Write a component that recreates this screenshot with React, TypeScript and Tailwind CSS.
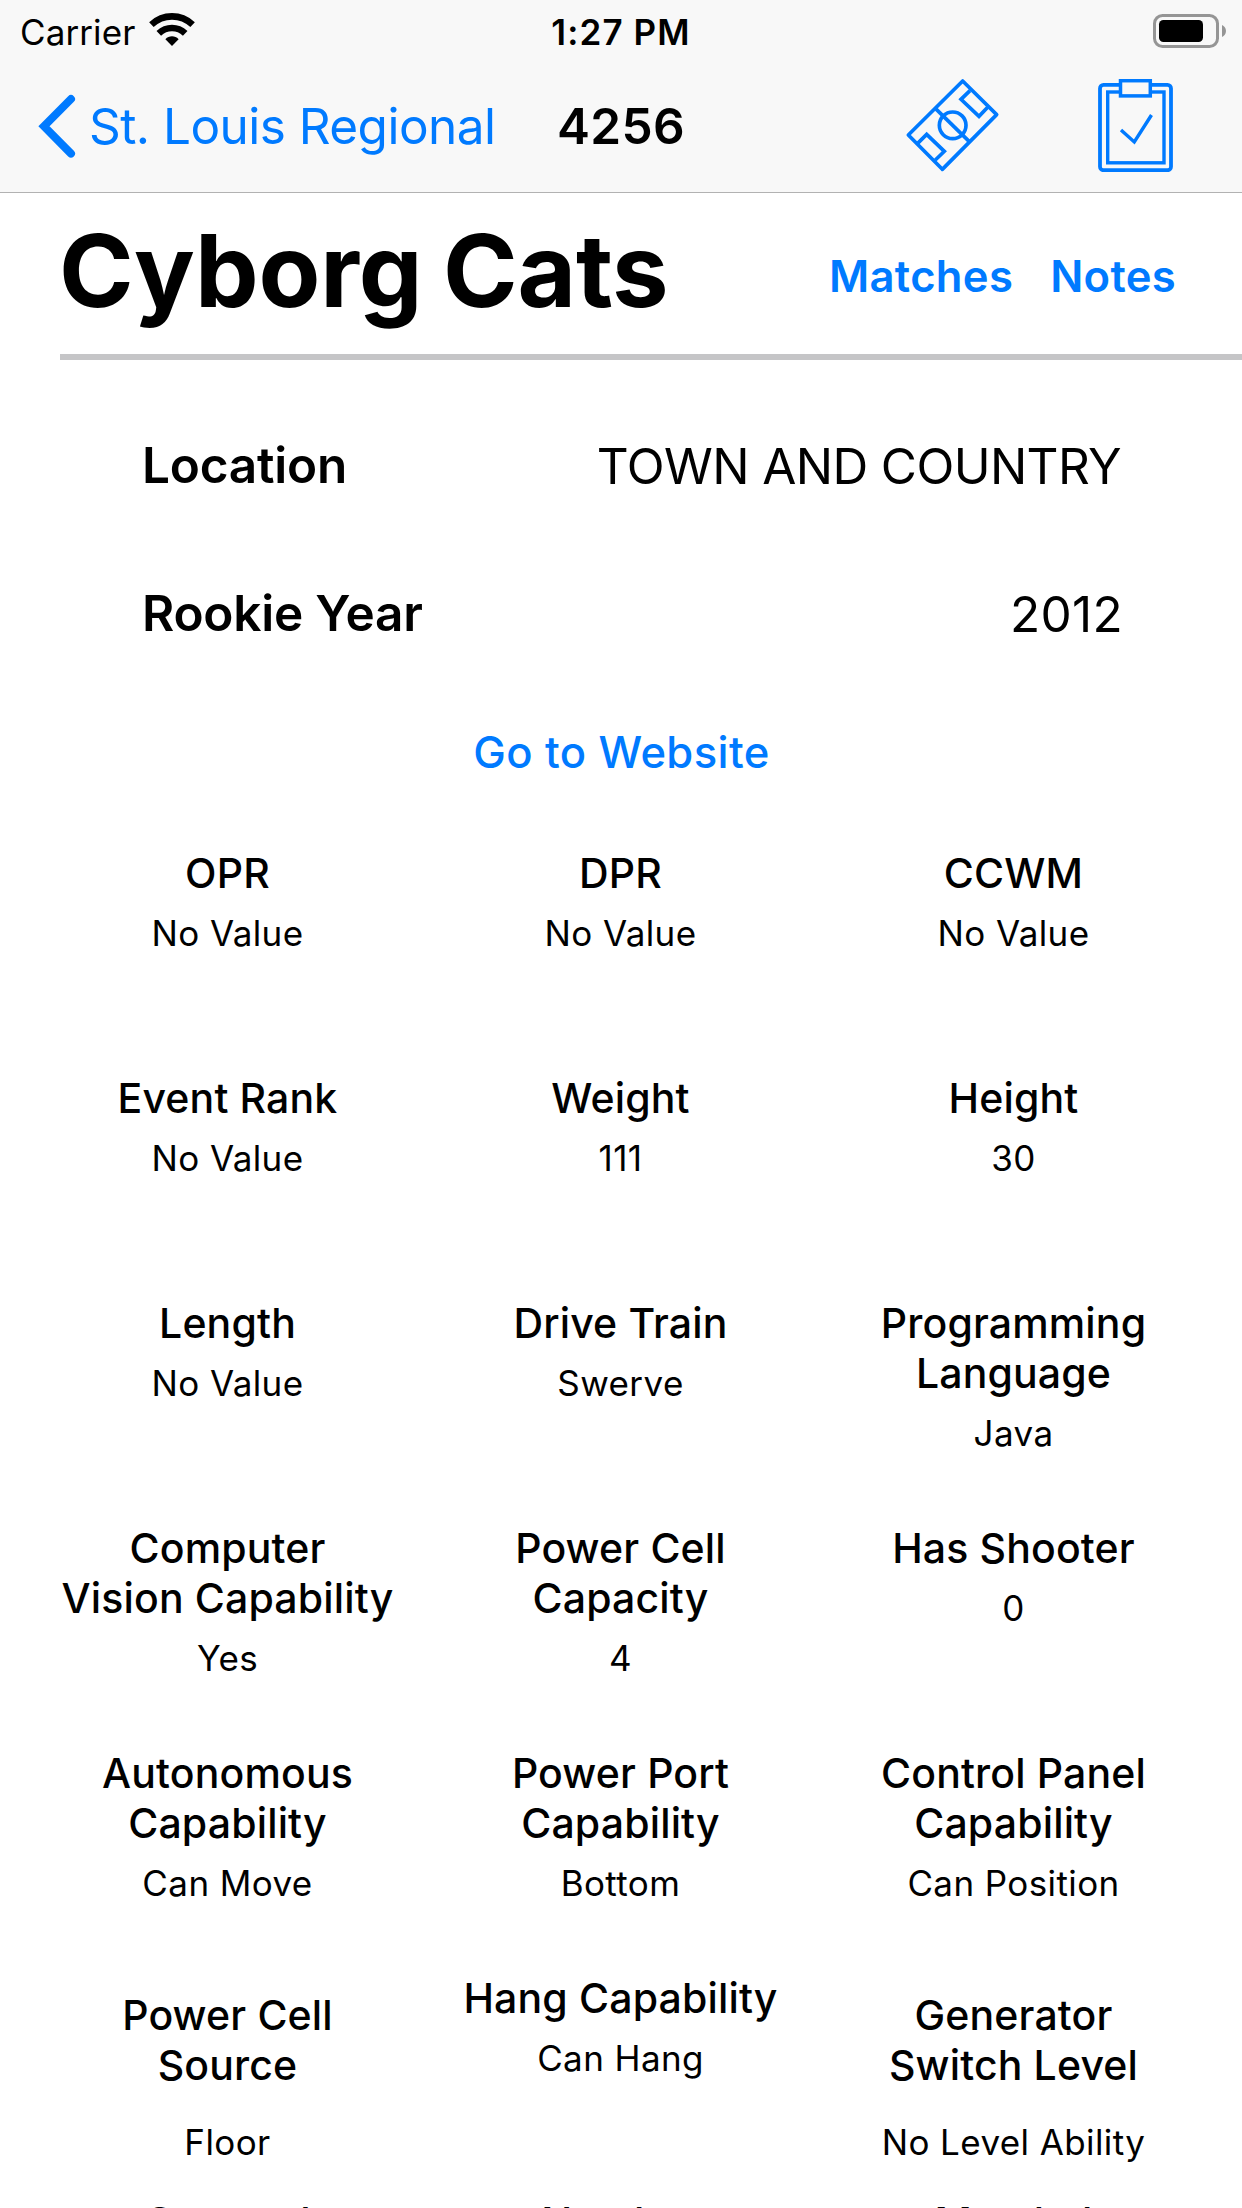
import React from "react";

type Stat = { title: string[]; value: string; layout?: "spread" | "raised" };

const stats: Stat[] = [
  { title: ["OPR"], value: "No Value" },
  { title: ["DPR"], value: "No Value" },
  { title: ["CCWM"], value: "No Value" },
  { title: ["Event Rank"], value: "No Value" },
  { title: ["Weight"], value: "111" },
  { title: ["Height"], value: "30" },
  { title: ["Length"], value: "No Value" },
  { title: ["Drive Train"], value: "Swerve" },
  { title: ["Programming", "Language"], value: "Java" },
  { title: ["Computer", "Vision Capability"], value: "Yes" },
  { title: ["Power Cell", "Capacity"], value: "4" },
  { title: ["Has Shooter"], value: "0" },
  { title: ["Autonomous", "Capability"], value: "Can Move" },
  { title: ["Power Port", "Capability"], value: "Bottom" },
  { title: ["Control Panel", "Capability"], value: "Can Position" },
  { title: ["Power Cell", "Source"], value: "Floor", layout: "spread" },
  { title: ["Hang Capability"], value: "Can Hang" },
  { title: ["Generator", "Switch Level"], value: "No Level Ability", layout: "spread" },
  { title: ["Covered"], value: "", layout: "raised" },
  { title: ["Number"], value: "", layout: "raised" },
  { title: ["Marshal"], value: "", layout: "raised" },
];

const cellClass = {
  normal: "flex flex-col gap-[14px]",
  spread: "flex flex-col gap-[31px] pt-[17px]",
  raised: "-mt-px flex flex-col gap-[14px]",
};

function WifiIcon() {
  return (
    <svg className="mb-[3px] ml-[14px] h-[33px] w-[46px]" viewBox="0 0 46 33" fill="none" stroke="#000">
      <path d="M2.4 11.6C14.2 0.6 31.8 0.6 43.6 11.6" strokeWidth="6.6" />
      <path d="M9.8 20.4C17.4 13.2 28.6 13.2 36.2 20.4" strokeWidth="6.6" />
      <path d="M23 33L16.4 26.2C20 22.4 26 22.4 29.6 26.2Z" fill="#000" stroke="none" />
    </svg>
  );
}

function BatteryIcon() {
  return (
    <svg className="h-[34px] w-[74px]" viewBox="0 0 74 34" fill="none">
      <rect x="1.5" y="1.5" width="63" height="31" rx="8" stroke="#959595" strokeWidth="3" />
      <rect x="6" y="6" width="44" height="22" rx="4.5" fill="#000" />
      <path d="M69 11C71.2 12 73 14.2 73 17S71.2 22 69 23Z" fill="#959595" />
    </svg>
  );
}

function FieldIcon() {
  return (
    <svg className="h-[110px] w-[130px]" viewBox="0 0 390 330" fill="none" stroke="#007aff" strokeWidth="11">
      <path d="M218 33L320 134L157 298L55 195Z" strokeLinejoin="round" />
      <path d="M136 115L238 215" />
      <circle cx="188" cy="166" r="40" />
      <path d="M240 62L213 88L267 139L293 112M83 220L110 193L163 244L136 270" />
    </svg>
  );
}

function ClipboardIcon() {
  return (
    <svg className="h-[93px] w-[75px]" viewBox="0 0 75 93" fill="none" stroke="#007aff">
      <rect x="2" y="5.9" width="71" height="85.3" rx="3.5" strokeWidth="3.8" />
      <rect x="9.7" y="13" width="56.3" height="70.8" strokeWidth="3.4" />
      <rect x="22.5" y="1.7" width="29.8" height="15.2" strokeWidth="3.5" fill="#f8f8f8" />
      <path d="M23 51L36.3 63L53.5 36" strokeWidth="3.4" />
    </svg>
  );
}

export default function App() {
  return (
    <div className="flex h-[2208px] w-[1242px] flex-col overflow-hidden bg-white font-[Inter,sans-serif] text-black">
      <header className="h-[193px] shrink-0 border-b border-[#b2b2b2] bg-[#f8f8f8]">
        <div className="grid h-[60px] grid-cols-[1fr_auto_1fr] items-center text-[35px] leading-[60px]">
          <div className="flex items-center pl-5">
            <span className="pt-[2px] tracking-[0.1px]">Carrier</span>
            <WifiIcon />
          </div>
          <span className="pt-[2px] font-semibold tracking-[1.1px]">1:27 PM</span>
          <div className="flex justify-end pr-[15px]">
            <BatteryIcon />
          </div>
        </div>
        <nav className="grid h-[132px] grid-cols-[1fr_auto_1fr] items-center text-[49.5px] leading-[60px]">
          <button className="flex items-center pl-[38px] text-[#007aff]">
            <svg className="h-[64px] w-[38px]" viewBox="0 0 38 64" fill="none" stroke="#007aff" strokeWidth="8" strokeLinecap="round">
              <path d="M33 5L6 32.3L33 59.6" />
            </svg>
            <span className="ml-[13px] whitespace-nowrap tracking-[-0.54px]">St. Louis Regional</span>
          </button>
          <span className="font-semibold tracking-[0.3px]">4256</span>
          <div className="flex items-center justify-end gap-[78px] pr-[69px] pb-[2px]">
            <FieldIcon />
            <ClipboardIcon />
          </div>
        </nav>
      </header>

      <section className="flex h-[161px] shrink-0 items-start justify-between pt-[17px] pr-[66px] pl-[59px]">
        <h1 className="text-[101px] leading-[120px] font-bold tracking-[-0.2px] [word-spacing:-3px]">Cyborg Cats</h1>
        <div className="flex gap-[37px] pt-[41px] text-[43.6px] leading-[52px] font-semibold tracking-[0.3px] text-[#007aff]">
          <button>Matches</button>
          <button>Notes</button>
        </div>
      </section>
      <div className="ml-[60px] h-[6px] shrink-0 bg-[#c5c5c7]" />

      <dl className="flex shrink-0 flex-col gap-[87px] pt-[75px] pr-[121px] pl-[142px] text-[49.5px] leading-[60px]">
        <div className="flex justify-between">
          <dt className="font-semibold tracking-[-0.2px]">Location</dt>
          <dd className="pt-px tracking-[-0.6px]">TOWN AND COUNTRY</dd>
        </div>
        <div className="flex justify-between">
          <dt className="font-semibold tracking-[-0.23px]">Rookie Year</dt>
          <dd className="-mr-[2px] pt-px tracking-[0.3px]">2012</dd>
        </div>
      </dl>

      <button className="mt-[83px] h-[52px] shrink-0 pl-px text-[43.6px] leading-[52px] font-medium tracking-[0.37px] text-[#007aff]">
        Go to Website
      </button>

      <div className="mt-[69px] grid shrink-0 auto-rows-[225px] grid-cols-3 gap-x-[58px] pr-[61px] pl-[60px] text-center">
        {stats.map((s, i) => (
          <div key={i} className={cellClass[s.layout ?? "normal"]}>
            <h2 className="text-[41px] leading-[50px] font-medium tracking-[0.15px]">
              {s.title.map((line) => (
                <span key={line} className="block whitespace-nowrap">
                  {line}
                </span>
              ))}
            </h2>
            <p className="text-[35px] leading-[43px] tracking-[0.4px]">{s.value}</p>
          </div>
        ))}
      </div>
    </div>
  );
}
